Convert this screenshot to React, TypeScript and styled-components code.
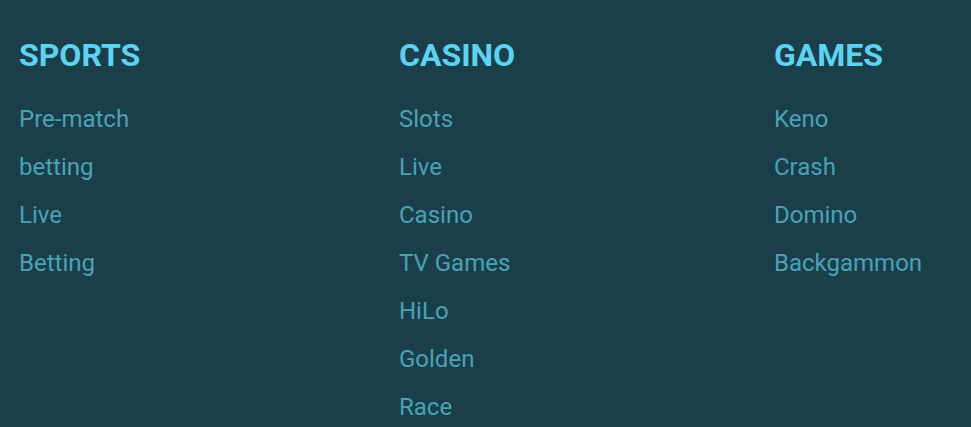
import React from 'react';
import styled, { createGlobalStyle } from 'styled-components';

const GlobalStyle = createGlobalStyle`
  html, body {
    margin: 0;
    padding: 0;
    background: #1a3f4b;
  }
  body {
    font-family: Roboto, "Liberation Sans", sans-serif;
  }
`;

interface Section {
  title: string;
  links: string[];
}

const sections: Section[] = [
  { title: 'SPORTS', links: ['Pre-match', 'betting', 'Live', 'Betting'] },
  { title: 'CASINO', links: ['Slots', 'Live', 'Casino', 'TV Games', 'HiLo', 'Golden', 'Race'] },
  { title: 'GAMES', links: ['Keno', 'Crash', 'Domino', 'Backgammon'] },
];

const App: React.FC = () => {
  return (
    <>
      <GlobalStyle />
      <Footer>
        {sections.map((s) => (
          <Column key={s.title}>
            <Heading>{s.title}</Heading>
            <LinkList>
              {s.links.map((l, i) => (
                <li key={i}>
                  <FooterLink href="#">{l}</FooterLink>
                </li>
              ))}
            </LinkList>
          </Column>
        ))}
      </Footer>
    </>
  );
};

const Footer = styled.footer`
  height: 427px;
  box-sizing: border-box;
  padding: 35px 19px 0;
  display: grid;
  grid-template-columns: 380px 375px 1fr;
  background: #1a3f4b;
  overflow: hidden;
`;

const Column = styled.div`
  display: flex;
  flex-direction: column;
`;

const Heading = styled.h3`
  margin: 0 0 30px;
  font-size: 32px;
  line-height: 40px;
  font-weight: 700;
  color: #5cd3f3;
`;

const LinkList = styled.ul`
  list-style: none;
  margin: 0;
  padding: 0;
  display: flex;
  flex-direction: column;
  gap: 20px;

  li {
    font-size: 24px;
    line-height: 28px;
  }
`;

const FooterLink = styled.a`
  display: block;
  font-size: 24px;
  line-height: 28px;
  color: #4ba2b5;
  text-decoration: none;
`;

export default App;
